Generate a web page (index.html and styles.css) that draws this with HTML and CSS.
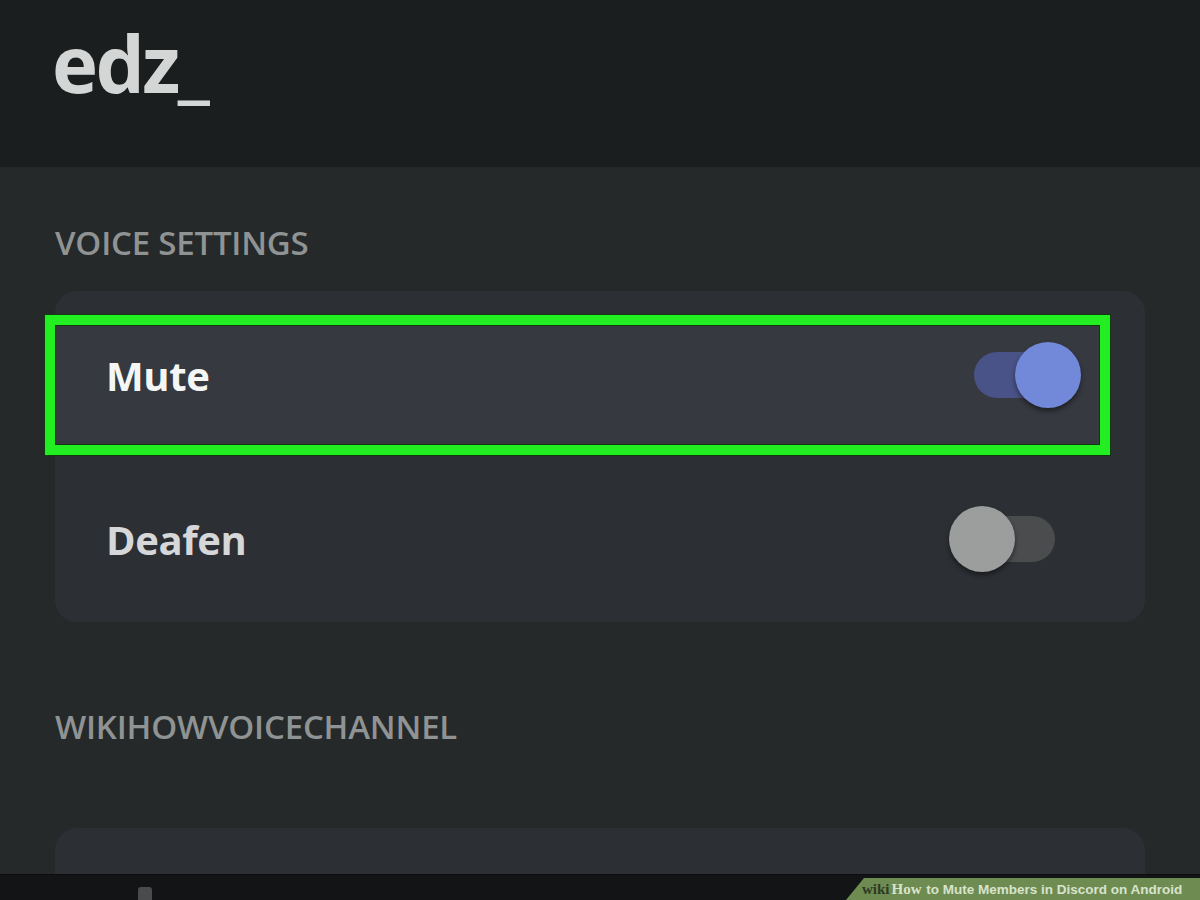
FILE: index.html
```html
<!DOCTYPE html>
<html>
<head>
<meta charset="utf-8">
<link rel="stylesheet" href="styles.css">
</head>
<body>
<div class="screen">
  <header class="top">
    <h1 class="username">edz_</h1>
  </header>
  <main class="content">
    <h2 class="section-title">VOICE SETTINGS</h2>
    <section class="card">
      <div class="row row-highlight">
        <span class="row-label label-on">Mute</span>
        <span class="toggle toggle-on"><span class="track"></span><span class="thumb"></span></span>
      </div>
      <div class="row">
        <span class="row-label">Deafen</span>
        <span class="toggle toggle-off"><span class="track"></span><span class="thumb"></span></span>
      </div>
    </section>
    <h2 class="section-title section-title-2">WIKIHOWVOICECHANNEL</h2>
    <section class="card card-2"></section>
  </main>
  <footer class="bottom">
    <span class="nav-icon"></span>
    <div class="tag"><span class="tag-wiki">wiki</span><span class="tag-how">How</span> to Mute Members in Discord on Android</div>
  </footer>
</div>
</body>
</html>
```

FILE: styles.css
```css
* { box-sizing: border-box; margin: 0; padding: 0; }
html, body { width: 1200px; height: 900px; overflow: hidden; background: #25292a; }
body { font-family: "Open Sans", "Noto Sans", sans-serif; }
.screen { width: 1200px; height: 900px; display: flex; flex-direction: column; position: relative; }

.top { height: 167px; background: #1a1e1f; padding: 24px 0 0 52px; flex: none; }
.username { font-size: 78px; font-weight: 700; color: #d4d5d5; letter-spacing: -2.6px; line-height: 1; }

.content { flex: 1; padding: 0 55px; display: flex; flex-direction: column; overflow: hidden; }
.section-title { font-size: 33px; font-weight: 600; color: #8f9393; line-height: 1; margin-top: 59px; letter-spacing: -0.2px; flex: none; }
.section-title-2 { margin-top: 88px; }

.card { flex: none; margin-top: 32px; background: #2c2f34; border-radius: 22px; height: 331px; padding-top: 24px; display: flex; flex-direction: column; }
.card-2 { margin-top: 85px; height: 80px; }

.row { flex: none; display: flex; align-items: center; justify-content: space-between; height: 168px; padding: 0 53px 0 51px; }
.row-highlight { height: 140px; margin: 0 35px 0 -10px; padding: 0 18px 20px 51px; background: #36393f; border: 10px solid #22ee22; box-shadow: 0 0 0 1px #0f3a10, inset 0 0 0 1px #0f3a10; }
.row-label { font-size: 40px; font-weight: 700; color: #d6d7d8; letter-spacing: -0.4px; }
.label-on { color: #f4f5f5; }

.toggle { position: relative; width: 110px; height: 66px; flex: none; }
.track { position: absolute; top: 10px; height: 46px; border-radius: 23px; }
.thumb { position: absolute; top: 0; width: 66px; height: 66px; border-radius: 50%; box-shadow: 0 3px 5px rgba(0,0,0,0.45); }
.toggle-on .track { left: 2px; width: 76px; background: #4a5387; }
.toggle-on .thumb { left: 43px; background: #7289da; }
.toggle-off { margin-right: 33px; }
.toggle-off .track { left: 26px; width: 80px; background: #4b4c4e; }
.toggle-off .thumb { left: 0; background: #9c9e9e; }

.bottom { position: absolute; left: 0; right: 0; bottom: 0; height: 26px; background: #131415; border-top: 1px solid #0c0d0e; }
.nav-icon { position: absolute; left: 138px; top: 12px; width: 14px; height: 14px; background: #4a4b4c; border-radius: 3px 3px 0 0; }
.tag { position: absolute; right: 0; bottom: 0; height: 22px; width: 354px; background: #6e8c52; clip-path: polygon(18px 0, 100% 0, 100% 100%, 0 100%); padding-left: 16px; font-family: "Liberation Sans", Arial, sans-serif; font-size: 13.5px; line-height: 22px; color: #d8e3cc; font-weight: 700; white-space: nowrap; }
.tag-wiki { color: #2e3a22; font-family: "Liberation Serif", serif; font-size: 15px; margin-right: 2px; }
.tag-how { color: #d8e3cc; font-family: "Liberation Serif", serif; font-size: 15px; margin-right: 1px; }
```
